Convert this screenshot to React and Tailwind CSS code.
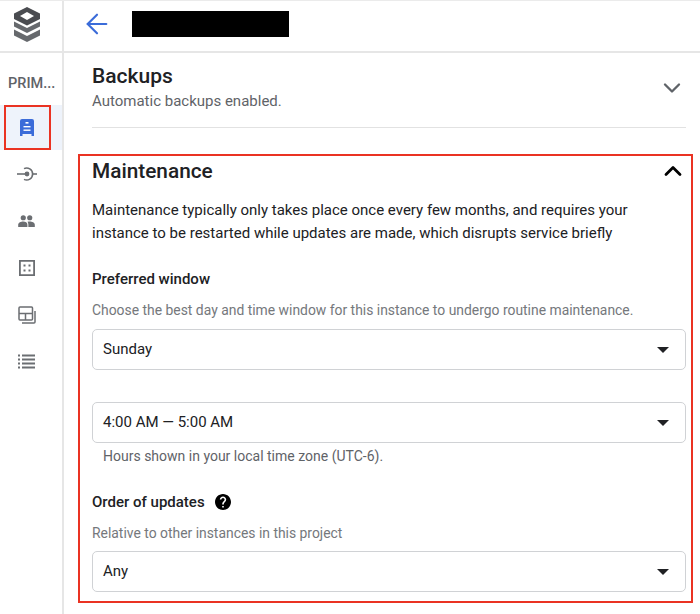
import React from "react";
import { ArrowLeft, ChevronDown, ChevronUp } from "lucide-react";

const Logo = () => (
  <svg width="26" height="35" viewBox="0 0 26 35">
    <path d="M13 0 L26 6.5 V12 L13 18.5 L0 12 V6.5 Z M13 5 L6 9 L13 13 L20 9 Z" fill="#4a4c50" fillRule="evenodd" />
    <path d="M0 14.5 L13 21 L26 14.5 V19.5 L13 26 L0 19.5 Z" fill="#66696d" />
    <path d="M0 22.5 L13 29 L26 22.5 V28.5 L13 35 L0 28.5 Z" fill="#66696d" />
  </svg>
);

const InstanceIcon = () => (
  <svg width="14" height="17" viewBox="0 0 14 17">
    <path d="M2 0 H12 A2 2 0 0 1 14 2 V17 H11.5 V15 H2.5 V17 H0 V2 A2 2 0 0 1 2 0 Z" fill="#3b6cd9" />
    <rect x="5.5" y="3" width="3" height="1.6" fill="#fff" />
    <rect x="3.5" y="7" width="7" height="1.4" fill="#fff" />
    <rect x="3.5" y="10.5" width="7" height="1.4" fill="#fff" />
  </svg>
);

const ConnectIcon = () => (
  <svg width="20" height="16" viewBox="0 0 20 16" fill="none" stroke="#6b6e72" strokeWidth="1.6">
    <path d="M0 8 H10" />
    <path d="M15 8 H20" />
    <path d="M7 2.6 A6 6 0 1 1 7 13.4" />
    <circle cx="10" cy="8" r="2.4" fill="#6b6e72" stroke="none" />
  </svg>
);

const PeopleIcon = () => (
  <svg width="17" height="12" viewBox="0 0 18 13" fill="#6b6e72">
    <circle cx="5.5" cy="3" r="2.8" />
    <circle cx="12.5" cy="3" r="2.8" />
    <path d="M0 13 V10.5 C0 8 3 7 5.5 7 C8 7 10 8 10 10.5 V13 Z" />
    <path d="M11 13 V10.5 C11 9 10.6 8 10 7.3 C11 7 11.8 7 12.5 7 C15 7 18 8 18 10.5 V13 Z" />
  </svg>
);

const GridIcon = () => (
  <svg width="16" height="16" viewBox="0 0 16 16" fill="#6b6e72">
    <path d="M0 0 H16 V16 H0 Z M1.8 1.8 V14.2 H14.2 V1.8 Z" fillRule="evenodd" />
    <rect x="4.5" y="4.5" width="2" height="2" />
    <rect x="9.5" y="4.5" width="2" height="2" />
    <rect x="4.5" y="9.5" width="2" height="2" />
    <rect x="9.5" y="9.5" width="2" height="2" />
  </svg>
);

const LayersIcon = () => (
  <svg width="18" height="18" viewBox="0 0 18 18" fill="none" stroke="#6b6e72" strokeWidth="1.5">
    <rect x="1" y="1" width="13.5" height="13" rx="1" />
    <path d="M1 7.5 H14.5 M7.5 7.5 V14" />
    <path d="M17 5 V16 A1 1 0 0 1 16 17 H4" />
  </svg>
);

const ListIcon = () => (
  <svg width="17" height="15" viewBox="0 0 17 15" fill="#6b6e72">
    <rect x="0" y="0.5" width="2" height="2" />
    <rect x="4" y="0.5" width="13" height="2" />
    <rect x="0" y="4.5" width="2" height="2" />
    <rect x="4" y="4.5" width="13" height="2" />
    <rect x="0" y="8.5" width="2" height="2" />
    <rect x="4" y="8.5" width="13" height="2" />
    <rect x="0" y="12.5" width="2" height="2" />
    <rect x="4" y="12.5" width="13" height="2" />
  </svg>
);

const HelpIcon = () => (
  <svg width="16" height="16" viewBox="2 2 20 20" fill="#000">
    <path d="M12 2C6.48 2 2 6.48 2 12s4.48 10 10 10 10-4.48 10-10S17.52 2 12 2zm1 17h-2v-2h2v2zm2.07-7.75l-.9.92C13.45 12.9 13 13.5 13 15h-2v-.5c0-1.1.45-2.1 1.17-2.83l1.24-1.26c.37-.36.59-.86.59-1.41 0-1.1-.9-2-2-2s-2 .9-2 2H8c0-2.21 1.79-4 4-4s4 1.79 4 4c0 .88-.36 1.68-.93 2.25z" />
  </svg>
);

const SelectBox = ({ value }) => (
  <div className="h-[41px] border border-[#d0d2d5] rounded-[5px] flex items-center justify-between pl-[10px] pr-[16px] text-[15px] text-[#202124]">
    <span>{value}</span>
    <span className="w-0 h-0 border-x-[6px] border-x-transparent border-t-[6px] border-t-[#202124]"></span>
  </div>
);

const RailItem = ({ children }) => (
  <div className="h-[47px] flex items-center justify-center pr-[9px]">{children}</div>
);

export default function App() {
  return (
    <div className="w-[700px] h-[614px] overflow-hidden bg-white flex font-['Roboto',sans-serif] border-t border-[#ebebeb]">
      {/* left rail */}
      <aside className="w-[64px] shrink-0 border-r-2 border-[#e6e6e6] flex flex-col">
        <div className="h-[52px] shrink-0 border-b-2 border-[#e6e6e6] flex items-center justify-center pr-[9px] pb-[3px]">
          <Logo />
        </div>
        <div className="h-[52px] shrink-0 pt-[21px] pl-[8px] text-[14.5px] leading-[20px] font-medium text-[#5f6368]">
          PRIM...
        </div>
        <div className="relative h-[45px] shrink-0 bg-[#eef3fb] flex items-center justify-center pr-[9px]">
          <InstanceIcon />
          <div className="absolute left-[4px] top-0 w-[47px] h-[45px] border-2 border-[#ea3323]"></div>
        </div>
        <RailItem><ConnectIcon /></RailItem>
        <RailItem><PeopleIcon /></RailItem>
        <RailItem><GridIcon /></RailItem>
        <RailItem><LayersIcon /></RailItem>
        <RailItem><ListIcon /></RailItem>
      </aside>

      {/* main */}
      <main className="flex-1 min-w-0 flex flex-col">
        <div className="h-[52px] shrink-0 border-b-2 border-[#e6e6e6] flex items-center pl-[17px] pb-[5px]">
          <ArrowLeft size={32} color="#3b6cd9" strokeWidth={1.6} />
          <div className="ml-[19px] w-[157px] h-[26px] bg-black"></div>
        </div>

        <section className="h-[75px] ml-[28px] mr-[14px] pt-[9px] border-b border-[#e2e2e2] flex justify-between shrink-0">
          <div>
            <h2 className="text-[21px] leading-[28px] font-medium text-[#202124]">Backups</h2>
            <p className="text-[15px] leading-[20px] mt-[1px] text-[#5f6368]">Automatic backups enabled.</p>
          </div>
          <ChevronDown size={28} color="#5f6368" strokeWidth={2} className="mt-[12px]" />
        </section>

        <section className="mt-[26px] ml-[14px] mr-[7px] h-[449px] shrink-0 border-2 border-[#ea3323] pl-[12px] pr-[5px] pt-[1px]">
          <div className="flex justify-between items-center h-[28px]">
            <h2 className="text-[20.8px] leading-[28px] font-medium text-[#202124]">Maintenance</h2>
            <ChevronUp size={28} color="#000" strokeWidth={2.4} className="mr-[-1px]" />
          </div>
          <p className="mt-[14px] text-[15px] leading-[22.5px] text-[#202124]">
            Maintenance typically only takes place once every few months, and requires your
            <br />
            instance to be restarted while updates are made, which disrupts service briefly
          </p>
          <h3 className="mt-[25px] text-[15px] leading-[20px] font-medium text-[#202124]">Preferred window</h3>
          <p className="mt-[11px] text-[13.9px] leading-[20px] text-[#75787c]">
            Choose the best day and time window for this instance to undergo routine maintenance.
          </p>
          <div className="mt-[9px]">
            <SelectBox value="Sunday" />
          </div>
          <div className="mt-[32px]">
            <SelectBox value="4:00 AM — 5:00 AM" />
          </div>
          <p className="mt-[3px] pl-[11px] text-[14px] leading-[20px] text-[#5f6368]">
            Hours shown in your local time zone (UTC-6).
          </p>
          <div className="mt-[26px] flex items-center gap-[10px] h-[20px]">
            <h3 className="text-[15px] leading-[20px] font-medium text-[#202124]">Order of updates</h3>
            <HelpIcon />
          </div>
          <p className="mt-[11px] text-[13.9px] leading-[20px] text-[#75787c]">
            Relative to other instances in this project
          </p>
          <div className="mt-[8px]">
            <SelectBox value="Any" />
          </div>
        </section>
      </main>
    </div>
  );
}
